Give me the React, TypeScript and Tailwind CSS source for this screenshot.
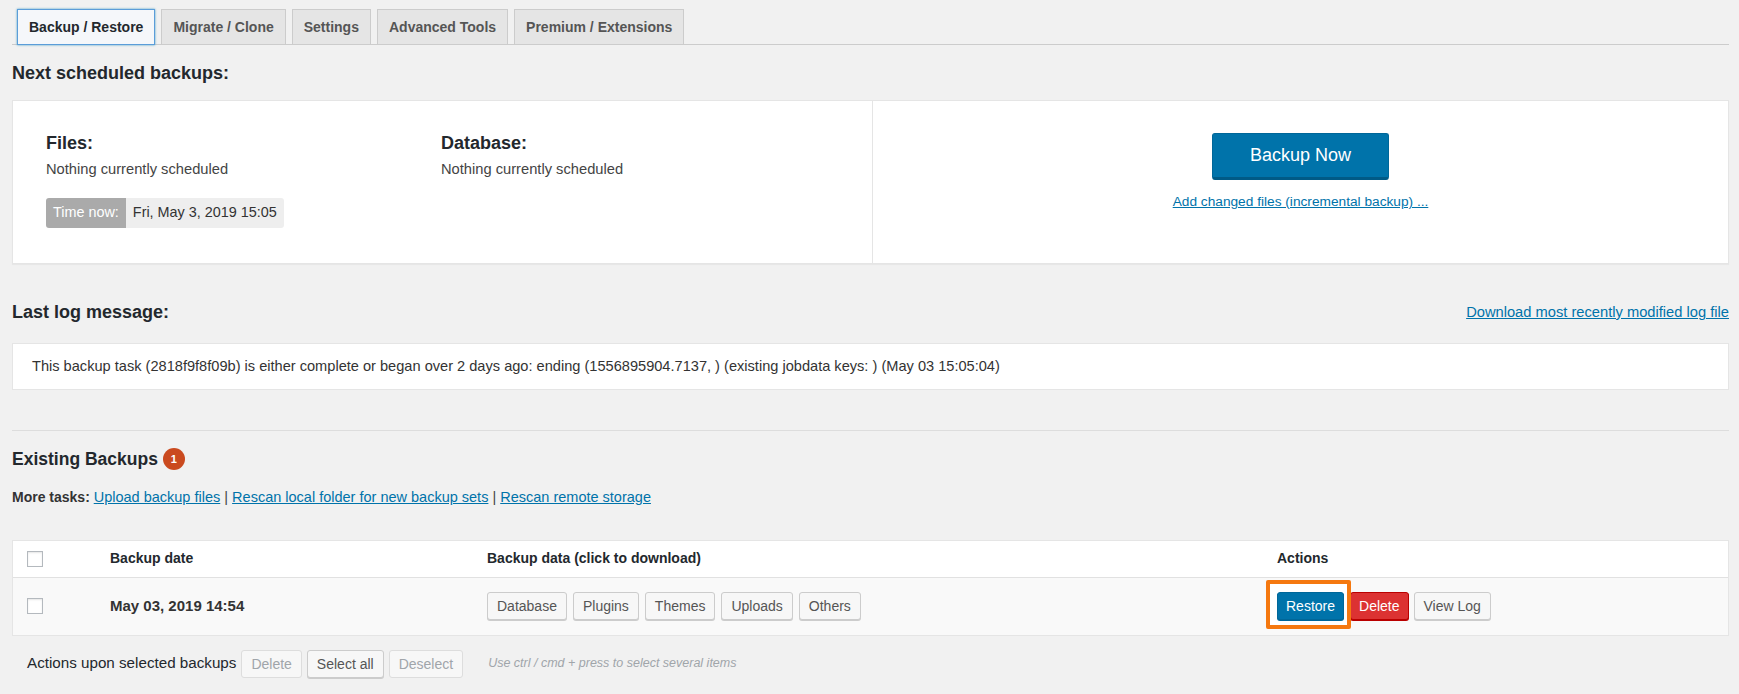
import React from "react"

const tabs = ["Backup / Restore", "Migrate / Clone", "Settings", "Advanced Tools", "Premium / Extensions"]
const dataButtons = ["Database", "Plugins", "Themes", "Uploads", "Others"]

const Checkbox = () => (
    <span className="block w-[16px] h-[16px] border border-[#b4b9be] bg-white shadow-[inset_0_1px_2px_rgba(0,0,0,0.1)]" />
)

const GrayButton = ({ label, disabled }: { label: string, disabled?: boolean }) => (
    <button
        className={`h-[28px] px-[9px] rounded-[3px] border text-[14px] leading-none bg-[#f7f7f7] ${disabled ? 'border-[#ddd] text-[#a0a5aa]' : 'border-[#ccc] text-[#555] shadow-[0_1px_0_#ccc]'}`}>
        {label}
    </button>
)

export default function App() {
    return (
        <div className="min-h-screen bg-[#f1f1f1] font-['Liberation_Sans',Arial,sans-serif] text-[#444] pl-[12px] pr-[10px] pt-[9px] pb-6">
            {/* tabs */}
            <div className="flex items-end gap-[6px] pl-[5px] border-b border-[#ccc] h-[36px]">
                {tabs.map((t, i) => (
                    <div
                        key={t}
                        className={`h-[36px] flex items-center px-[11px] border text-[14px] font-bold -mb-px ${i === 0 ? 'bg-[#f5f7fa] border-[#5b9dd9] text-[#23282d] shadow-[0_0_2px_rgba(30,140,190,0.8)]' : 'bg-[#e5e5e5] border-[#ccc] text-[#555] h-[35px]'}`}>
                        {t}
                    </div>
                ))}
            </div>

            <h2 className="mt-[17px] text-[18px] leading-[22px] font-semibold text-[#23282d]">Next scheduled backups:</h2>

            {/* schedule card */}
            <div className="mt-[16px] flex bg-white border border-[#e5e5e5] shadow-[0_1px_1px_rgba(0,0,0,0.04)] h-[164px]">
                <div className="w-[860px] border-r border-[#e5e5e5] pl-[33px] pt-[31px]">
                    <div className="flex">
                        <div className="w-[395px]">
                            <h3 className="text-[18px] leading-[22px] font-semibold text-[#23282d]">Files:</h3>
                            <p className="mt-[6px] text-[14.7px] leading-[18px]">Nothing currently scheduled</p>
                        </div>
                        <div>
                            <h3 className="text-[18px] leading-[22px] font-semibold text-[#23282d]">Database:</h3>
                            <p className="mt-[6px] text-[14.7px] leading-[18px]">Nothing currently scheduled</p>
                        </div>
                    </div>
                    <div className="mt-[20px] inline-flex h-[30px] rounded-[3px] overflow-hidden text-[14.4px]">
                        <span className="bg-[#aaa] text-white px-[7px] flex items-center">Time now:</span>
                        <span className="bg-[#eee] text-[#333] pl-[7px] pr-[7px] flex items-center">Fri, May 3, 2019 15:05</span>
                    </div>
                </div>
                <div className="flex-1 flex flex-col items-center pt-[32px]">
                    <button className="w-[177px] h-[47px] rounded-[3px] bg-[#0073aa] border border-[#006799] border-b-[3px] border-b-[#005a86] text-white text-[18px]">
                        Backup Now
                    </button>
                    <a className="mt-[12px] text-[13.7px] text-[#0073aa] underline">Add changed files (incremental backup) ...</a>
                </div>
            </div>

            {/* log */}
            <div className="mt-[37px] flex items-center justify-between">
                <h2 className="text-[18px] leading-[22px] font-semibold text-[#23282d]">Last log message:</h2>
                <a className="text-[14.7px] text-[#0073aa] underline">Download most recently modified log file</a>
            </div>
            <div className="mt-[20px] h-[47px] bg-white border border-[#e5e5e5] flex items-center pl-[19px] text-[14.6px] text-[#333]">
                This backup task (2818f9f8f09b) is either complete or began over 2 days ago: ending (1556895904.7137, ) (existing jobdata keys: ) (May 03 15:05:04)
            </div>

            <hr className="mt-[40px] border-0 border-t border-[#ddd]" />

            <h2 className="mt-[17px] flex items-center gap-[5px] text-[17.5px] leading-[22px] font-semibold text-[#23282d]">
                Existing Backups
                <span className="w-[22px] h-[22px] rounded-full bg-[#ca4a1f] text-white text-[11px] font-bold flex items-center justify-center">1</span>
            </h2>

            <p className="mt-[17px] text-[14.5px] text-[#444]">
                <span className="font-semibold text-[#333] text-[14px]">More tasks: </span>
                <a className="text-[#0073aa] underline">Upload backup files</a> | <a className="text-[#0073aa] underline">Rescan local folder for new backup sets</a> | <a className="text-[#0073aa] underline">Rescan remote storage</a>
            </p>

            {/* table */}
            <div className="mt-[31px] border border-[#e5e5e5] bg-white">
                <div className="h-[37px] flex items-center border-b border-[#e1e1e1] text-[14px] font-semibold text-[#23282d]">
                    <div className="w-[97px] pl-[14px]"><Checkbox /></div>
                    <div className="w-[377px]">Backup date</div>
                    <div className="w-[790px]">Backup data (click to download)</div>
                    <div>Actions</div>
                </div>
                <div className="h-[57px] flex items-center bg-[#f9f9f9]">
                    <div className="w-[97px] pl-[14px]"><Checkbox /></div>
                    <div className="w-[377px] text-[15px] font-bold text-[#333]">May 03, 2019 14:54</div>
                    <div className="w-[790px] flex gap-[6px]">
                        {dataButtons.map(b => <GrayButton key={b} label={b} />)}
                    </div>
                    <div className="flex items-center">
                        <div className="relative">
                            <span className="absolute -left-[11px] -right-[7px] -top-[12px] -bottom-[9px] border-4 border-[#f5780f] rounded-[2px] bg-white" />
                            <button className="relative h-[28px] px-[8px] rounded-[3px] bg-[#0073aa] border border-[#006799] shadow-[0_1px_0_#006799] text-white text-[14px]">Restore</button>
                        </div>
                        <button className="ml-[6px] h-[28px] px-[8px] rounded-[3px] bg-[#dc3232] border border-[#ba0000] shadow-[0_1px_0_#ba0000] text-white text-[14px]">Delete</button>
                        <div className="ml-[5px]"><GrayButton label="View Log" /></div>
                    </div>
                </div>
            </div>

            <div className="mt-[14px] flex items-center pl-[15px]">
                <span className="text-[15.2px] text-[#23282d] mr-[5px]">Actions upon selected backups</span>
                <div className="flex gap-[5px]">
                    <GrayButton label="Delete" disabled />
                    <GrayButton label="Select all" />
                    <GrayButton label="Deselect" disabled />
                </div>
                <span className="ml-[25px] text-[12.5px] italic text-[#a0a5aa]">Use ctrl / cmd + press to select several items</span>
            </div>
        </div>
    )
}
